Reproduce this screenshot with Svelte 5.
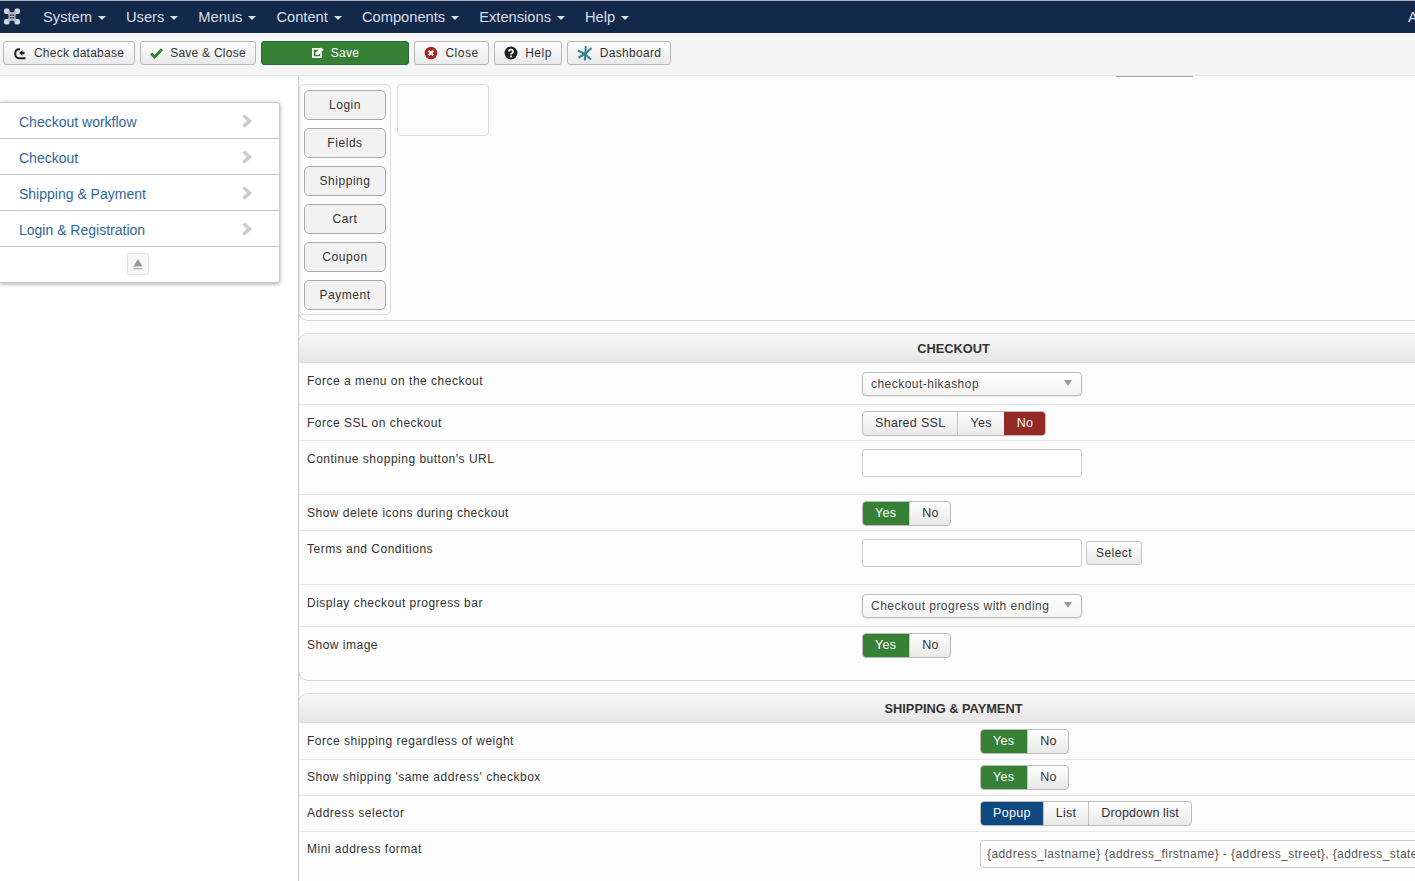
<script>
	const nav = ['System', 'Users', 'Menus', 'Content', 'Components', 'Extensions', 'Help'];
	const side = ['Checkout workflow', 'Checkout', 'Shipping & Payment', 'Login & Registration'];
	const tabs = ['Login', 'Fields', 'Shipping', 'Cart', 'Coupon', 'Payment'];
</script>

{#snippet toggle(items, on, kind)}
	<div class="toggle">
		{#each items as item, i}
			<span class="opt {i === on ? kind : ''}">{item}</span>
		{/each}
	</div>
{/snippet}

<div class="page">
	<nav class="navbar">
		<svg class="logo" width="18" height="17" viewBox="0 0 18 17">
			<g fill="#d5d9df">
				<rect x="1" y="0.500" width="5.500" height="5.500" rx="2" />
				<rect x="11.500" y="0.500" width="5.500" height="5.500" rx="2" />
				<rect x="1" y="11" width="5.500" height="5.500" rx="2" />
				<rect x="11.500" y="11" width="5.500" height="5.500" rx="2" />
			</g>
			<path d="M4 2.500 9 4.500l5-2-1.800 6 1.800 6-5-2-5 2 1.800-6z" fill="#b4bbc6" />
			<g fill="#13294a">
				<rect x="7" y="6.500" width="1.500" height="1.500" />
				<rect x="9.500" y="6.500" width="1.500" height="1.500" />
				<rect x="7" y="9" width="1.500" height="1.500" />
				<rect x="9.500" y="9" width="1.500" height="1.500" />
			</g>
		</svg>
		<ul class="menu">
			{#each nav as item}
				<li>{item}<i class="caret"></i></li>
			{/each}
		</ul>
		<span class="user">A</span>
	</nav>

	<div class="toolbar">
		<button type="button" class="tbtn check">
			<svg width="13" height="13" viewBox="0 0 13 13">
				<path d="M6 2.200H5A3.600 3.600 0 0 0 1.300 6v1.500A3.600 3.600 0 0 0 5 11.200h6.500" fill="none" stroke="#222" stroke-width="2" />
				<path d="M6.500 3 10 6 6.500 9V7.300H4.500V4.700h2z" fill="#222" transform="matrix(-1 0 0 1 15 0)" />
			</svg>
			Check database
		</button>
		<button type="button" class="tbtn saveclose">
			<svg width="13" height="12" viewBox="0 0 13 12"><path d="M1 6.500 4.600 10 12 2.200" fill="none" stroke="#378137" stroke-width="3" /></svg>
			Save &amp; Close
		</button>
		<button type="button" class="tbtn save">
			<svg width="13" height="12" viewBox="0 0 13 12">
				<path d="M1 1h8.500L8 2.800H2.800v6.400h6.400V6.500L11 4.700V11H1z" fill="#fff" />
				<path d="M4.500 5.500 10.300.6 12.600 2.800 7.300 8H4.500z" fill="#fff" />
			</svg>
			Save
		</button>
		<button type="button" class="tbtn close">
			<svg width="14" height="14" viewBox="0 0 14 14">
				<circle cx="7" cy="7" r="6.300" fill="#a5281f" />
				<path d="M4.700 4.700l4.600 4.600M9.300 4.700l-4.600 4.600" stroke="#fff" stroke-width="2" />
			</svg>
			Close
		</button>
		<button type="button" class="tbtn help">
			<svg width="14" height="14" viewBox="0 0 14 14">
				<circle cx="7" cy="7" r="6.500" fill="#222" />
				<path d="M4.900 5.500a2.100 1.900 0 1 1 3.200 1.600c-.7.400-1.100.7-1.100 1.400" fill="none" stroke="#fff" stroke-width="1.700" />
				<rect x="6.100" y="9.500" width="1.800" height="1.800" fill="#fff" />
			</svg>
			Help
		</button>
		<button type="button" class="tbtn dash">
			<svg width="16" height="16" viewBox="0 0 16 16" fill="none" stroke="#2f7f8c" stroke-width="2">
				<path d="M8.800 1 7.800 15.500" />
				<path d="M1 5.500 8 9l6 5.500" />
				<path d="M14.500 3 8 9l-6.500 3.500" />
			</svg>
			Dashboard
		</button>
	</div>

	<div class="body">
		<aside class="sidecol">
			<div class="sidemenu">
				{#each side as item}
					<div class="sideitem">
						<span>{item}</span>
						<svg width="11" height="14" viewBox="0 0 11 14"><path d="M2.500 1.500 8.500 7l-6 5.500" fill="none" stroke="#ccc" stroke-width="3.600" /></svg>
					</div>
				{/each}
				<div class="sidefoot">
					<span class="collapse">
						<svg width="12" height="12" viewBox="0 0 12 12">
							<path d="M6 1 10.500 8.500H1.500z" fill="#999" />
							<rect x="1.500" y="10" width="9" height="1.300" fill="#aaa" />
						</svg>
					</span>
				</div>
			</div>
		</aside>

		<main class="main">
			<div class="workflow">
				<span class="stub"></span>
				<div class="tabs">
					{#each tabs as tab}
						<button type="button" class="tab">{tab}</button>
					{/each}
				</div>
				<div class="tabbox"></div>
			</div>

			<section class="panel checkout">
				<h3>CHECKOUT</h3>
				<div class="row r42">
					<span class="lbl">Force a menu on the checkout</span>
					<div class="ctl"><div class="select">checkout-hikashop<i></i></div></div>
				</div>
				<div class="row r36">
					<span class="lbl">Force SSL on checkout</span>
					<div class="ctl">{@render toggle(['Shared SSL', 'Yes', 'No'], 2, 'red')}</div>
				</div>
				<div class="row r54">
					<span class="lbl">Continue shopping button's URL</span>
					<div class="ctl"><div class="input"></div></div>
				</div>
				<div class="row r36">
					<span class="lbl">Show delete icons during checkout</span>
					<div class="ctl">{@render toggle(['Yes', 'No'], 0, 'green')}</div>
				</div>
				<div class="row r54">
					<span class="lbl">Terms and Conditions</span>
					<div class="ctl inline">
						<div class="input"></div>
						<button type="button" class="select-btn">Select</button>
					</div>
				</div>
				<div class="row r42">
					<span class="lbl">Display checkout progress bar</span>
					<div class="ctl"><div class="select">Checkout progress with ending<i></i></div></div>
				</div>
				<div class="row last">
					<span class="lbl">Show image</span>
					<div class="ctl">{@render toggle(['Yes', 'No'], 0, 'green')}</div>
				</div>
			</section>

			<section class="panel shipping">
				<h3>SHIPPING &amp; PAYMENT</h3>
				<div class="row r37">
					<span class="lbl">Force shipping regardless of weight</span>
					<div class="ctl">{@render toggle(['Yes', 'No'], 0, 'green')}</div>
				</div>
				<div class="row r36">
					<span class="lbl">Show shipping 'same address' checkbox</span>
					<div class="ctl">{@render toggle(['Yes', 'No'], 0, 'green')}</div>
				</div>
				<div class="row r36">
					<span class="lbl">Address selector</span>
					<div class="ctl">{@render toggle(['Popup', 'List', 'Dropdown list'], 0, 'blue')}</div>
				</div>
				<div class="row">
					<span class="lbl">Mini address format</span>
					<div class="ctl"><div class="input wide">{'{address_lastname} {address_firstname} - {address_street}, {address_state}'}</div></div>
				</div>
			</section>
		</main>
	</div>
</div>

<style>
	:global(body) {
		margin: 0;
		background: #fff;
		overflow: hidden;
	}
	.page {
		width: 1415px;
		height: 881px;
		overflow: hidden;
		font-family: "Liberation Sans", Arial, sans-serif;
		font-size: 12px;
		color: #333;
	}
	button {
		font-family: inherit;
		margin: 0;
	}

	/* ---- top bar ---- */
	.navbar {
		box-sizing: border-box;
		height: 33px;
		display: flex;
		align-items: center;
		background: #13294a;
		border-top: 1px solid #aab;
		padding: 0 0 1px 3px;
		color: #d9dfe8;
		font-size: 14.700px;
	}
	.logo {
		flex: none;
		margin-right: 22px;
	}
	.menu {
		display: flex;
		list-style: none;
		margin: 0;
		padding: 0;
		flex: 1;
	}
	.menu li {
		display: flex;
		align-items: center;
		margin-right: 20px;
	}
	.caret {
		width: 0;
		height: 0;
		margin-left: 6px;
		margin-top: 2px;
		border: 4px solid transparent;
		border-top-color: #d9dfe8;
		border-bottom: 0;
	}
	.user {
		margin-right: -1px;
		width: 8px;
		overflow: hidden;
	}

	/* ---- toolbar ---- */
	.toolbar {
		box-sizing: border-box;
		height: 43px;
		display: flex;
		align-items: center;
		gap: 5px;
		padding: 0 0 2px 3px;
		background: #f5f5f5;
		border-bottom: 1px solid #e3e3e3;
	}
	.tbtn {
		box-sizing: border-box;
		height: 24px;
		display: flex;
		align-items: center;
		justify-content: center;
		gap: 7px;
		padding: 0 6px;
		border: 1px solid #b9b9b9;
		border-radius: 3px;
		background: linear-gradient(#fefefe, #e9e9e9);
		color: #333;
		font-size: 12px;
		letter-spacing: 0.250px;
		white-space: nowrap;
	}
	.check { width: 132px; }
	.saveclose { width: 116px; }
	.save {
		width: 148px;
		background: #378137;
		border-color: #2a6a2a;
		color: #fff;
	}
	.close { width: 75px; letter-spacing: 0.500px; }
	.help { width: 68px; letter-spacing: 0.500px; }
	.dash { width: 104px; letter-spacing: 0.300px; }

	/* ---- side menu ---- */
	.body {
		display: flex;
	}
	.sidecol {
		flex: none;
		width: 298px;
		padding-top: 26px;
	}
	.sidemenu {
		box-sizing: border-box;
		width: 280px;
		height: 181px;
		background: #fff;
		border: 1px solid #ccc;
		border-left: 0;
		border-radius: 0 3px 3px 0;
		box-shadow: 0 1px 4px rgba(0, 0, 0, 0.35);
	}
	.sideitem {
		box-sizing: border-box;
		height: 36px;
		display: flex;
		align-items: center;
		justify-content: space-between;
		padding: 2px 27px 0 19px;
		border-bottom: 1px solid #c2c2c2;
		color: #30669b;
		font-size: 14px;
	}
	.sideitem svg {
		margin-top: -2px;
	}
	.sidefoot {
		display: flex;
		justify-content: center;
		padding-top: 6px;
		margin-right: 3px;
	}
	.collapse {
		box-sizing: border-box;
		width: 22px;
		height: 22px;
		display: flex;
		align-items: center;
		justify-content: center;
		border: 1px solid #e4e4e4;
		border-radius: 2px;
		background: #f6f6f6;
	}

	/* ---- main column ---- */
	.main {
		flex: none;
		width: 1309px;
		border-left: 1px solid #ccc;
		min-height: 806px;
		background: #fcfcfc;
	}
	.workflow {
		position: relative;
		box-sizing: border-box;
		height: 245px;
		display: flex;
		align-items: flex-start;
		gap: 6px;
		padding-top: 8px;
		margin-left: -1px;
		border-left: 1px solid #ccc;
		border-bottom: 1px solid #d8d8d8;
		border-bottom-left-radius: 10px;
	}
	.stub {
		position: absolute;
		left: 817px;
		top: 0;
		width: 77px;
		height: 1px;
		background: #aaa;
	}
	.tabs {
		box-sizing: border-box;
		width: 92px;
		height: 231px;
		display: flex;
		flex-direction: column;
		gap: 8px;
		padding: 5px 4px 0 4px;
		border: 1px solid #ddd;
		border-radius: 5px;
	}
	.tab {
		box-sizing: border-box;
		height: 30px;
		width: 82px;
		padding: 0 0 1px;
		border: 1px solid #aaa;
		border-radius: 5px;
		background: #f2f2f2;
		color: #333;
		font-size: 12px;
		letter-spacing: 0.550px;
	}
	.tabbox {
		box-sizing: border-box;
		width: 92px;
		height: 52px;
		border: 1px solid #ddd;
		border-radius: 4px;
	}

	.panel {
		margin-left: -1px;
		border: 1px solid #ddd;
		border-left-color: #ccc;
		border-right: 0;
		border-radius: 10px 0 0 10px;
	}
	.checkout {
		margin-top: 12px;
		height: 348px;
		box-sizing: border-box;
		border-bottom: 1px solid #d8d8d8;
	}
	.shipping {
		margin-top: 12px;
		border-bottom: 0;
		border-bottom-left-radius: 0;
	}
	h3 {
		box-sizing: border-box;
		height: 29px;
		margin: 0;
		padding-top: 1px;
		display: flex;
		align-items: center;
		justify-content: center;
		border-bottom: 1px solid #e2e2e2;
		border-radius: 9px 0 0 0;
		background: linear-gradient(#f8f8f8, #e6e6e6);
		color: #333;
		font-size: 12.800px;
		font-weight: 700;
	}
	.row {
		box-sizing: border-box;
		display: flex;
		align-items: flex-start;
		border-bottom: 1px solid #e6e6e6;
		padding-left: 8px;
	}
	.row.last,
	.shipping .row:last-child {
		border-bottom: 0;
	}
	.r36 { height: 36px; }
	.r37 { height: 37px; }
	.r42 { height: 42px; }
	.r54 { height: 54px; }
	.lbl {
		flex: none;
		width: 555px;
		padding-top: 10px;
		letter-spacing: 0.500px;
		line-height: 16px;
	}
	.shipping .lbl {
		width: 673px;
		padding-top: 9px;
	}
	.shipping .r37 .lbl {
		padding-top: 10px;
	}
	.ctl {
		padding-top: 6px;
		display: flex;
	}
	.shipping .r36 .ctl {
		padding-top: 5px;
	}
	.ctl:has(.select) {
		padding-top: 9px;
	}
	.ctl:has(.input) {
		padding-top: 8px;
	}
	.inline {
		gap: 4px;
		align-items: flex-start;
	}
	.select {
		position: relative;
		box-sizing: border-box;
		width: 220px;
		height: 24px;
		padding-left: 8px;
		line-height: 22px;
		border: 1px solid #bbb;
		border-radius: 4px;
		background: linear-gradient(#fff, #f3f3f3);
		box-shadow: 0 1px 2px rgba(0, 0, 0, 0.08);
		letter-spacing: 0.470px;
		color: #444;
	}
	.select i {
		position: absolute;
		right: 9px;
		top: 7px;
		border: 4px solid transparent;
		border-top: 6px solid #999;
		border-bottom: 0;
	}
	.input {
		box-sizing: border-box;
		width: 220px;
		height: 28px;
		border: 1px solid #ccc;
		border-radius: 3px;
		background: #fff;
	}
	.input.wide {
		width: 640px;
		padding: 0 6px;
		line-height: 26px;
		color: #555;
		letter-spacing: 0.420px;
		white-space: nowrap;
		overflow: hidden;
	}
	.select-btn {
		box-sizing: border-box;
		height: 24px;
		width: 56px;
		margin-top: 2px;
		padding: 0;
		border: 1px solid #c4c4c4;
		border-radius: 3px;
		background: linear-gradient(#fefefe, #e9e9e9);
		color: #333;
		font-size: 12px;
		letter-spacing: 0.400px;
	}
	.toggle {
		display: flex;
		height: 25px;
		border-radius: 4px;
		border: 1px solid #bbb;
		box-sizing: border-box;
		background: linear-gradient(#fefefe, #e9e9e9);
		overflow: hidden;
	}
	.opt {
		padding: 0 12px;
		line-height: 23px;
		border-left: 1px solid #c4c4c4;
		letter-spacing: 0.300px;
		font-size: 12.500px;
	}
	.opt:first-child {
		border-left: 0;
	}
	.red { background: #942a25; color: #fff; border-color: #942a25; }
	.green { background: #378137; color: #fff; border-color: #378137; padding: 0 13px 0 12px; }
	.blue { background: #10497f; color: #fff; border-color: #10497f; }
	.green + .opt { padding-right: 11px; }
	.blue + .opt + .opt { letter-spacing: 0.150px; }
</style>
